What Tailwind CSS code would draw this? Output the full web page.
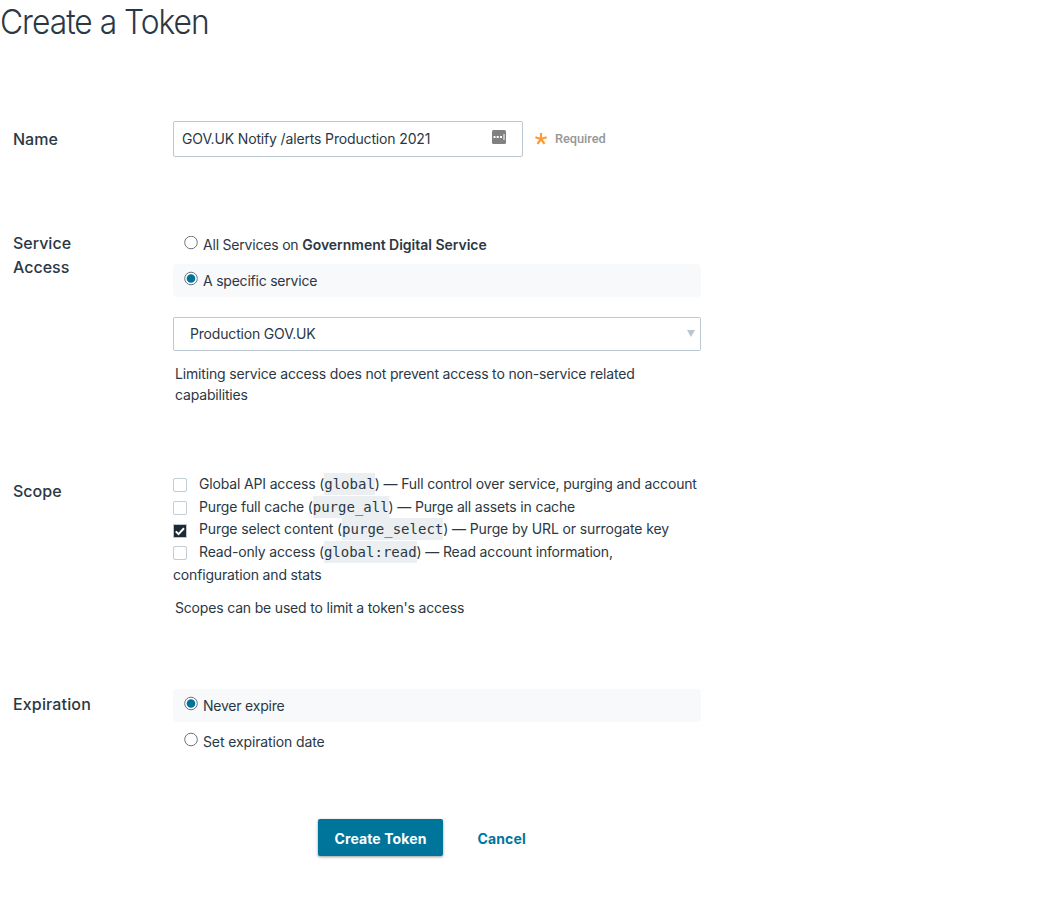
<!DOCTYPE html>
<html lang="en">
<head>
<meta charset="utf-8">
<title>Create a Token</title>
<script src="https://cdn.jsdelivr.net/npm/@tailwindcss/browser@4"></script>
</head>
<body class="h-[906px] overflow-hidden bg-white font-['Inter',sans-serif] text-sm text-[#2b3844]">
<h1 class="h-[121px] origin-left scale-x-[0.935] pt-[2px] text-[34px] leading-10 font-light tracking-[-1.1px]">Create a Token</h1>
<form class="tracking-[-0.18px]">
  <section class="flex h-[111px]">
    <label class="w-[173px] shrink-0 pl-[13px] pt-[6px] text-base leading-6 font-medium tracking-normal">Name</label>
    <div class="flex h-9 w-[350px] items-center justify-between rounded-xs border border-[#bbc8d2] pl-2 pr-4">
      <span class="tracking-[-0.15px]">GOV.UK Notify /alerts Production 2021</span>
      <svg class="mb-1 h-[14px] w-[14px]" viewBox="0 0 14 14"><rect width="14" height="14" rx="1.500" fill="#808080"/><path d="M1.500 6h2v2h-2zM4.700 6h2v2h-2zM8 6h2v2H8zM11.500 4h1v6h-1z" fill="#fff"/></svg>
    </div>
    <div class="flex h-9 items-center pl-[11.500px]">
      <svg class="mb-[1px] h-3 w-3" viewBox="0 0 12 12" fill="none" stroke="#fd9a35" stroke-width="2.200"><path d="M6 6V0M6 6L.4 4.200M6 6l5.600-1.800M6 6l-3.500 4.900M6 6l3.500 4.900"/></svg>
      <span class="pl-[8.500px] font-['Roboto',sans-serif] text-[12.8px] font-medium tracking-[-0.05px] text-[#979797]">Required</span>
    </div>
  </section>

  <section class="flex h-[241px]">
    <h2 class="-mt-px w-[173px] shrink-0 pl-[13px] pr-16 text-base leading-6 font-medium tracking-normal">Service Access</h2>
    <div class="w-[528px]">
      <label class="flex h-8 pl-[11px]">
        <svg class="mt-[3.500px] h-[14px] w-[14px]" viewBox="0 0 14 14"><circle cx="7" cy="6.500" r="6.300" fill="#fff" stroke="#6b747c"/></svg>
        <span class="pl-[5px] pt-[3px] tracking-[-0.2px]">All Services on <b class="font-semibold tracking-[-0.02px]">Government Digital Service</b></span>
      </label>
      <label class="flex h-[33px] rounded-sm bg-[#f7f9fb] pl-[11px]">
        <svg class="mt-[8px] h-[14px] w-[14px] overflow-visible" viewBox="0 0 14 14"><circle cx="7" cy="6.500" r="6.300" fill="#fff" stroke="#6b747c"/><circle cx="7" cy="6.500" r="4.300" fill="#007399"/></svg>
        <span class="pl-[5px] pt-[7px] tracking-[-0.22px]">A specific service</span>
      </label>
      <div class="mt-5 flex h-[34px] items-center justify-between rounded-xs border border-[#bbc8d2] pl-4 pr-[5px]">
        <span>Production GOV.UK</span>
        <svg class="mb-[2px] h-[7px] w-2" viewBox="0 0 8 7"><path d="M0 0h8L4 7z" fill="#b9c5cf"/></svg>
      </div>
      <p class="mt-3 w-[480px] pl-[2px] leading-[21px] tracking-[-0.17px]">Limiting service access does not prevent access to non-service related capabilities</p>
    </div>
  </section>

  <section class="flex h-[216px]">
    <h2 class="w-[173px] shrink-0 pl-[13px] pt-[6px] text-base leading-6 font-medium tracking-normal">Scope</h2>
    <div class="w-[528px] leading-[22.7px] tracking-[-0.16px]">
      <div class="flex whitespace-nowrap"><span class="mt-[5px] mr-3 h-[14px] w-[14px] shrink-0 rounded-xs border border-[#c1ccd5]"></span><span>Global API access (<code class="bg-[#ebeff2] py-[3px] font-['DejaVu_Sans_Mono',monospace] tracking-normal">global</code>) — Full control over service, purging and account</span></div>
      <div class="flex whitespace-nowrap"><span class="mt-[5px] mr-3 h-[14px] w-[14px] shrink-0 rounded-xs border border-[#c1ccd5]"></span><span>Purge full cache (<code class="bg-[#ebeff2] py-[3px] font-['DejaVu_Sans_Mono',monospace] tracking-normal">purge_all</code>) — Purge all assets in cache</span></div>
      <div class="flex whitespace-nowrap tracking-[-0.12px]"><svg class="mt-[5.600px] mr-3 h-[14px] w-[14px] shrink-0" viewBox="0 0 14 14"><rect x=".5" y=".5" width="13" height="13" fill="#1b2a35" stroke="#bbc8d2"/><path d="M2.800 7.400l2.700 2.700L11 4.300" fill="none" stroke="#fff" stroke-width="2"/></svg><span>Purge select content (<code class="bg-[#ebeff2] py-[3px] font-['DejaVu_Sans_Mono',monospace] tracking-normal">purge_select</code>) — Purge by URL or surrogate key</span></div>
      <div class="flex whitespace-nowrap"><span class="mt-[5px] mr-3 h-[14px] w-[14px] shrink-0 rounded-xs border border-[#c1ccd5]"></span><span>Read-only access (<code class="bg-[#ebeff2] py-[3px] font-['DejaVu_Sans_Mono',monospace] tracking-normal">global:read</code>) — Read account information,</span></div>
      <div>configuration and stats</div>
      <p class="mt-[10px] pl-[2px] leading-[21px] tracking-[-0.18px]">Scopes can be used to limit a token's access</p>
    </div>
  </section>

  <section class="flex h-[130px]">
    <h2 class="w-[173px] shrink-0 pl-[13px] pt-[3px] text-base leading-6 font-medium tracking-[0.15px]">Expiration</h2>
    <div class="w-[528px]">
      <label class="flex h-[33px] rounded-sm bg-[#f7f9fb] pl-[11px]">
        <svg class="mt-[8px] h-[14px] w-[14px] overflow-visible" viewBox="0 0 14 14"><circle cx="7" cy="6.500" r="6.300" fill="#fff" stroke="#6b747c"/><circle cx="7" cy="6.500" r="4.300" fill="#007399"/></svg>
        <span class="pl-[5px] pt-[7px] tracking-[-0.22px]">Never expire</span>
      </label>
      <label class="flex h-9 pl-[11px]">
        <svg class="mt-[11px] h-[14px] w-[14px] overflow-visible" viewBox="0 0 14 14"><circle cx="7" cy="6.500" r="6.300" fill="#fff" stroke="#6b747c"/></svg>
        <span class="pl-[5px] pt-[10px] tracking-[-0.12px]">Set expiration date</span>
      </label>
    </div>
  </section>

  <div class="flex gap-[34.500px] pl-[318px] font-bold tracking-[0.12px]">
    <button type="button" class="h-[37px] w-[125px] rounded-xs bg-[#00759b] pt-[2px] text-white shadow-[0_1px_3px_rgba(0,0,0,0.4)]">Create Token</button>
    <a class="pt-[10px] text-[#00759b]">Cancel</a>
  </div>
</form>
</body>
</html>
